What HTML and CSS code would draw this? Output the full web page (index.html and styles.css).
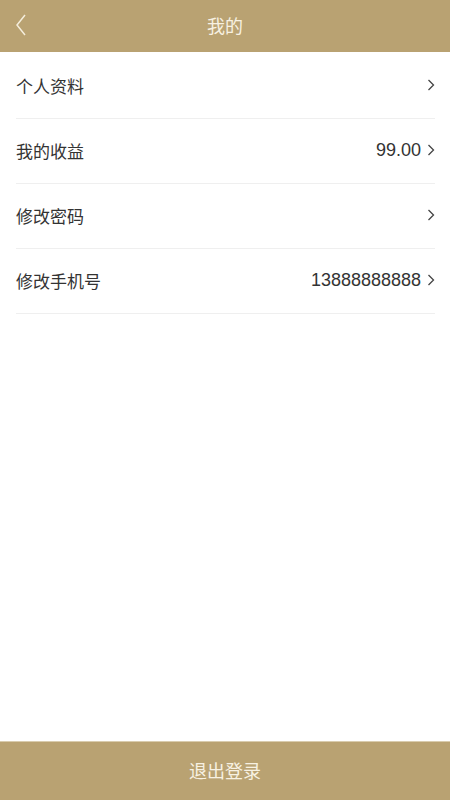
FILE: index.html
```html
<!DOCTYPE html>
<html lang="zh-CN">
<head>
<meta charset="utf-8">
<title>我的</title>
<link rel="stylesheet" href="styles.css">
</head>
<body>
<div class="page">
  <header class="topbar">
    <span class="back">
      <svg width="14" height="24" viewBox="0 0 14 24"><path d="M11 2 L3 12 L11 22" fill="none" stroke="#f4eddc" stroke-width="1.5"/></svg>
    </span>
    <h1 class="title">我的</h1>
  </header>
  <ul class="list">
    <li class="row"><span class="label">个人资料</span><span class="right"><svg class="chev" width="8" height="14" viewBox="0 0 8 14"><path d="M1.5 2 L6.5 7 L1.5 12" fill="none" stroke="#444" stroke-width="1.3"/></svg></span></li>
    <li class="row"><span class="label">我的收益</span><span class="right"><span class="value">99.00</span><svg class="chev" width="8" height="14" viewBox="0 0 8 14"><path d="M1.5 2 L6.5 7 L1.5 12" fill="none" stroke="#444" stroke-width="1.3"/></svg></span></li>
    <li class="row"><span class="label">修改密码</span><span class="right"><svg class="chev" width="8" height="14" viewBox="0 0 8 14"><path d="M1.5 2 L6.5 7 L1.5 12" fill="none" stroke="#444" stroke-width="1.3"/></svg></span></li>
    <li class="row"><span class="label">修改手机号</span><span class="right"><span class="value">13888888888</span><svg class="chev" width="8" height="14" viewBox="0 0 8 14"><path d="M1.5 2 L6.5 7 L1.5 12" fill="none" stroke="#444" stroke-width="1.3"/></svg></span></li>
  </ul>
  <div class="spacer"></div>
  <footer class="logout">退出登录</footer>
</div>
</body>
</html>
```
FILE: styles.css
```css
* { box-sizing: border-box; }
html, body { margin: 0; padding: 0; }
body {
  width: 450px;
  height: 800px;
  background: #ffffff;
  font-family: "Liberation Sans", "Noto Sans CJK SC", sans-serif;
  color: #333333;
}
.page {
  display: flex;
  flex-direction: column;
  height: 800px;
}
.topbar {
  height: 52px;
  background: #b9a272;
  display: flex;
  align-items: center;
  justify-content: center;
  position: relative;
  flex: none;
}
.back {
  position: absolute;
  left: 14px;
  top: 13px;
  display: flex;
}
.title {
  margin: 0 0 2px;
  font-size: 18px;
  font-weight: normal;
  color: #f7f1e2;
}
.list {
  list-style: none;
  margin: 2px 0 0;
  padding: 0 15px 0 16px;
  flex: none;
}
.row {
  height: 65px;
  display: flex;
  align-items: center;
  justify-content: space-between;
  border-bottom: 1px solid #efefef;
  font-size: 17px;
  padding-bottom: 2px;
}
.label { color: #333333; }
.right {
  display: flex;
  align-items: center;
  gap: 6px;
}
.value {
  color: #333333;
  font-size: 18px;
}
.chev { display: block; }
.spacer { flex: 1; }
.logout {
  height: 59px;
  flex: none;
  background: #b9a272;
  border-top: 1px solid #d9ccae;
  display: flex;
  align-items: center;
  justify-content: center;
  font-size: 18px;
  color: #f7f1e2;
  padding-bottom: 3px;
}
```
